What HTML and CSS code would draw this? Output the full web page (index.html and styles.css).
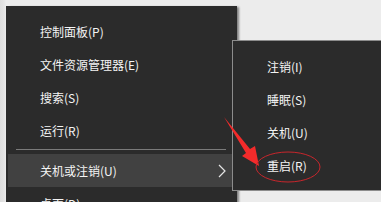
FILE: index.html
```html
<!DOCTYPE html>
<html>
<head>
  <meta charset="utf-8">
  <title>关机或注销</title>
  <link rel="stylesheet" href="styles.css">
</head>
<body>
  <div class="screen">
    <div class="start-menu">
      <ul class="menu">
        <li>控制面板(P)</li>
        <li>文件资源管理器(E)</li>
        <li>搜索(S)</li>
        <li>运行(R)</li>
        <li class="sep"></li>
        <li class="active">
          <span>关机或注销(U)</span>
          <svg class="chevron" width="8" height="14" viewBox="0 0 8 14">
            <polyline points="1,1 7,7 1,13" fill="none" stroke="#e6e6e6" stroke-width="1.2"/>
          </svg>
        </li>
        <li>桌面(D)</li>
      </ul>
    </div>

    <div class="flyout">
      <ul class="menu">
        <li>注销(I)</li>
        <li>睡眠(S)</li>
        <li>关机(U)</li>
        <li>重启(R)</li>
      </ul>
    </div>

    <!-- red annotation drawn on top of the screenshot -->
    <svg class="marks" width="381" height="202" viewBox="0 0 381 202">
      <polygon points="224,117 250,149 255,146 259,166 242,156 246,153" fill="#f42b2b"/>
      <ellipse cx="288" cy="167" rx="32" ry="15" fill="none" stroke="#c8262b" stroke-width="1"/>
    </svg>
  </div>
</body>
</html>
```

FILE: styles.css
```css
body {
  margin: 0;
  background-color: #e9e9e9;
  font-family: "Noto Sans CJK SC", "Microsoft YaHei", sans-serif;
  font-size: 12px;
  color: #f4f4f4;
  overflow: hidden;
}

.screen {
  position: relative;
  width: 381px;
  height: 202px;
  overflow: hidden;
  padding: 6px 0 0 6px;
  box-sizing: border-box;
  background: linear-gradient(90deg, #dedede 0, #e4e4e4 4px, #ececec 6px);
}

.start-menu {
  width: 231px;
  height: 230px;
  background-color: #2b2b2b;
  box-shadow: 3px 0 2px -1px rgba(0, 0, 0, 0.45);
}

.menu {
  list-style: none;
  margin: 0;
  padding: 9px 0 0 0;
}

.menu li {
  height: 33px;
  display: flex;
  align-items: center;
  justify-content: space-between;
  padding-left: 34px;
  white-space: nowrap;
}

.menu li.sep {
  height: 1px;
  padding: 0;
  margin: 2px 11px 4px 10px;
  background-color: #7a7a7a;
}

.menu li.active {
  margin-left: 2px;
  padding-left: 32px;
  padding-right: 11px;
  background-color: #414141;
}

.chevron {
  display: block;
}

.flyout {
  position: absolute;
  left: 232px;
  top: 40px;
  width: 160px;
  height: 149px;
  background-color: #2b2b2b;
  border: 1px solid #8c8c8c;
}

.flyout .menu li {
  padding-left: 34px;
}

.marks {
  position: absolute;
  left: 0;
  top: 0;
}
```
